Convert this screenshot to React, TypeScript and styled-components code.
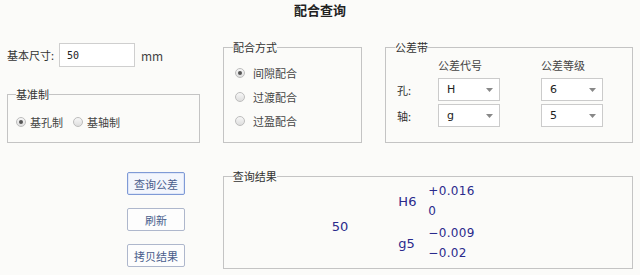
import React from "react";
import styled, { createGlobalStyle } from "styled-components";

const GlobalStyle = createGlobalStyle`
  html, body {
    margin: 0;
    padding: 0;
    background: #fbfbf9;
  }
  body {
    font-family: "Noto Sans CJK SC", "Microsoft YaHei", sans-serif;
    font-size: 11px;
    color: #333;
  }
`;

const Page = styled.div`
  width: 640px;
  height: 275px;
  padding: 0 7px;
  box-sizing: border-box;
  overflow: hidden;
`;

const Title = styled.div`
  text-align: center;
  font-size: 13px;
  font-weight: bold;
  line-height: 20px;
  color: #222;
  margin-bottom: 19px;
`;

const TopRow = styled.div`
  display: flex;
  align-items: flex-start;
  gap: 23px;
`;

const LeftCol = styled.div`
  width: 193px;
  display: flex;
  flex-direction: column;
`;

const SizeRow = styled.div`
  display: flex;
  align-items: center;
  height: 24px;
  margin-top: 4px;
`;

const SizeLabel = styled.span`
  width: 52px;
`;

const SizeInput = styled.input`
  width: 76px;
  height: 24px;
  box-sizing: border-box;
  border: 1px solid #cfcfcf;
  background: #fff;
  padding: 0 0 0 7px;
  font-family: "DejaVu Sans Mono", monospace;
  font-size: 10px;
  color: #222;
  outline: none;
`;

const Unit = styled.span`
  margin-left: 6px;
  color: #444;
  font-size: 12px;
`;

const Group = styled.fieldset<{ $w: number; $h: number; $top?: number }>`
  margin: ${(p) => p.$top ?? 0}px 0 0 0;
  padding: 0;
  width: ${(p) => p.$w}px;
  height: ${(p) => p.$h}px;
  min-width: 0;
  box-sizing: border-box;
  border: 1px solid #c4c4c4;
`;

const Legend = styled.legend<{ $off?: number }>`
  padding: 0;
  margin-left: ${(p) => p.$off ?? 8}px;
  font-size: 11px;
  line-height: 16px;
  color: #333;
`;

const RadioLine = styled.div`
  display: flex;
  align-items: center;
  gap: 10px;
  padding: 8px 0 0 8px;
  height: 24px;
`;

const RadioStack = styled.div`
  display: flex;
  flex-direction: column;
  padding: 6px 0 0 11px;
`;

const RadioItem = styled.label<{ $gap: number; $h?: number }>`
  display: flex;
  align-items: center;
  gap: ${(p) => p.$gap}px;
  height: ${(p) => p.$h ?? 24}px;
  color: #444;
`;

const RadioDot = styled.span<{ $checked?: boolean }>`
  position: relative;
  width: 10px;
  height: 10px;
  border-radius: 50%;
  box-sizing: border-box;
  border: 1px solid #bdbdbd;
  background: linear-gradient(#f7f7f7, #dedede);

  &::after {
    content: "";
    display: ${(p) => (p.$checked ? "block" : "none")};
    position: absolute;
    left: 2px;
    top: 2px;
    width: 4px;
    height: 4px;
    border-radius: 50%;
    background: #555;
  }
`;

const ToleranceGrid = styled.div`
  display: grid;
  grid-template-columns: 41px 103px 62px;
  grid-template-rows: 20px 23px 23px;
  row-gap: 3px;
  align-items: center;
  padding-left: 11px;
`;

const ColHead = styled.span`
  color: #444;
`;

const RowLabel = styled.span`
  color: #333;
`;

const Select = styled.div`
  width: 62px;
  height: 23px;
  box-sizing: border-box;
  border: 1px solid #cbcbcb;
  background: #fff;
  display: flex;
  align-items: center;
  justify-content: space-between;
  padding: 0 6px 0 8px;
  font-family: "DejaVu Sans", sans-serif;
  font-size: 11px;
  color: #222;
`;

const BottomRow = styled.div`
  display: flex;
  align-items: flex-start;
  margin-top: 25px;
`;

const ButtonCol = styled.div`
  width: 216px;
  box-sizing: border-box;
  padding: 4px 0 0 120px;
  display: flex;
  flex-direction: column;
  gap: 13px;
`;

const Button = styled.button<{ $active?: boolean }>`
  width: 58px;
  height: 23px;
  padding: 0;
  box-sizing: border-box;
  border: 1px solid ${(p) => (p.$active ? "#7f9ad6" : "#aeb7cc")};
  border-radius: 2px;
  background: ${(p) => (p.$active ? "#f3f6fd" : "#fdfdfd")};
  box-shadow: ${(p) => (p.$active ? "inset 0 0 0 1px #dfe7f8" : "none")};
  font-family: "Noto Sans CJK SC", sans-serif;
  font-size: 11px;
  color: #4a5d8c;
`;

const ResultBody = styled.div`
  display: flex;
  align-items: flex-start;
  padding-left: 108px;
  margin-top: -3px;
  font-family: "DejaVu Sans", sans-serif;
  color: #2a2a8c;
`;

const Nominal = styled.span`
  font-size: 13px;
  line-height: 20px;
  margin-top: 36px;
`;

const Fits = styled.div`
  display: flex;
  flex-direction: column;
  gap: 2px;
  margin-left: 50px;
`;

const FitGroup = styled.div`
  display: flex;
  align-items: center;
`;

const FitCode = styled.span`
  font-size: 13px;
  width: 30px;
`;

const Deviations = styled.div`
  display: flex;
  flex-direction: column;
  font-size: 12px;
  line-height: 20px;
  letter-spacing: 0.3px;
`;

const Caret = () => (
  <svg width="7" height="4" viewBox="0 0 7 4">
    <path d="M0 0 L7 0 L3.5 4 Z" fill="#888" />
  </svg>
);

const fits = [
  { code: "H6", upper: "+0.016", lower: "0" },
  { code: "g5", upper: "\u22120.009", lower: "\u22120.02" },
];

export default function App() {
  return (
    <>
      <GlobalStyle />
      <Page>
        <Title>配合查询</Title>
        <TopRow>
          <LeftCol>
            <SizeRow>
              <SizeLabel>基本尺寸:</SizeLabel>
              <SizeInput defaultValue="50" />
              <Unit>mm</Unit>
            </SizeRow>
            <Group $w={193} $h={57} $top={19}>
              <Legend>基准制</Legend>
              <RadioLine>
                <RadioItem $gap={4}>
                  <RadioDot $checked />
                  基孔制
                </RadioItem>
                <RadioItem $gap={4}>
                  <RadioDot />
                  基轴制
                </RadioItem>
              </RadioLine>
            </Group>
          </LeftCol>

          <Group $w={139} $h={104}>
            <Legend $off={9}>配合方式</Legend>
            <RadioStack>
              <RadioItem $gap={8}>
                <RadioDot $checked />
                间隙配合
              </RadioItem>
              <RadioItem $gap={8}>
                <RadioDot />
                过渡配合
              </RadioItem>
              <RadioItem $gap={8}>
                <RadioDot />
                过盈配合
              </RadioItem>
            </RadioStack>
          </Group>

          <Group $w={248} $h={104}>
            <Legend $off={9}>公差带</Legend>
            <ToleranceGrid>
              <span />
              <ColHead>公差代号</ColHead>
              <ColHead>公差等级</ColHead>
              <RowLabel>孔:</RowLabel>
              <Select>
                H
                <Caret />
              </Select>
              <Select>
                6
                <Caret />
              </Select>
              <RowLabel>轴:</RowLabel>
              <Select>
                g
                <Caret />
              </Select>
              <Select>
                5
                <Caret />
              </Select>
            </ToleranceGrid>
          </Group>
        </TopRow>

        <BottomRow>
          <ButtonCol>
            <Button $active>查询公差</Button>
            <Button>刷新</Button>
            <Button>拷贝结果</Button>
          </ButtonCol>
          <Group $w={411} $h={101}>
            <Legend $off={9}>查询结果</Legend>
            <ResultBody>
              <Nominal>50</Nominal>
              <Fits>
                {fits.map((f) => (
                  <FitGroup key={f.code}>
                    <FitCode>{f.code}</FitCode>
                    <Deviations>
                      <span>{f.upper}</span>
                      <span>{f.lower}</span>
                    </Deviations>
                  </FitGroup>
                ))}
              </Fits>
            </ResultBody>
          </Group>
        </BottomRow>
      </Page>
    </>
  );
}
